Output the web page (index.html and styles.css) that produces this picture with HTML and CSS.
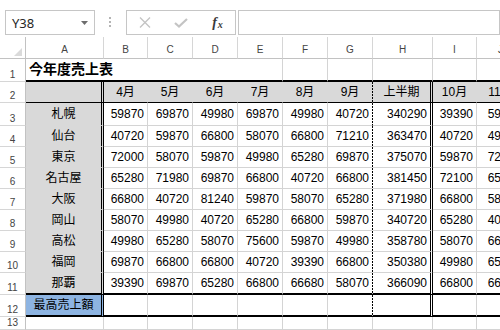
FILE: index.html
```html
<!DOCTYPE html>
<html lang="ja">
<head>
<meta charset="utf-8">
<title>今年度売上表</title>
<link rel="stylesheet" href="styles.css">
</head>
<body>
<div class="toolbar">
  <div class="namebox">
    <span class="nb-text">Y38</span>
    <svg class="nb-arrow" width="7" height="4" viewBox="0 0 7 4"><polygon points="0,0 7,0 3.5,4" fill="#6d6d6d"/></svg>
  </div>
  <div class="grip">
    <svg width="31" height="25" viewBox="0 0 31 25"><rect x="14" y="7" width="2" height="2" fill="#b4b4b4"/><rect x="14" y="11" width="2" height="2" fill="#b4b4b4"/><rect x="14" y="15" width="2" height="2" fill="#b4b4b4"/></svg>
  </div>
  <div class="fbtns">
    <span class="fbtn"><svg width="12" height="11" viewBox="0 0 12 11"><path d="M1 0.5 L11 10.5 M11 0.5 L1 10.5" stroke="#c4c4c4" stroke-width="1.4" fill="none"/></svg></span>
    <span class="fbtn"><svg width="14" height="10" viewBox="0 0 14 10"><path d="M1 5 L5 8.5 L13 1" stroke="#c4c4c4" stroke-width="2.2" fill="none"/></svg></span>
    <span class="fbtn fx"><i class="fx-f">f</i><i class="fx-x">x</i></span>
  </div>
  <div class="fbar"></div>
</div>

<div class="sheet">
  <div class="row hdr">
    <div class="ch corner"><svg width="8" height="8" viewBox="0 0 8 8"><polygon points="8,0 8,8 0,8" fill="#dadada"/></svg></div>
    <div class="ch">A</div><div class="ch">B</div><div class="ch">C</div><div class="ch">D</div><div class="ch">E</div>
    <div class="ch">F</div><div class="ch">G</div><div class="ch">H</div><div class="ch">I</div><div class="ch">J</div>
  </div>

  <div class="row r1">
    <div class="rh">1</div>
    <div class="c title">今年度売上表</div>
    <div class="c"></div><div class="c"></div><div class="c"></div><div class="c"></div><div class="c"></div>
  </div>

  <div class="row r2">
    <div class="rh">2</div>
    <div class="c hd dbl"></div>
    <div class="c hd ctr">4月</div><div class="c hd ctr">5月</div><div class="c hd ctr">6月</div>
    <div class="c hd ctr">7月</div><div class="c hd ctr">8月</div><div class="c hd ctr dash">9月</div>
    <div class="c hd ctr dbl">上半期</div><div class="c hd ctr">10月</div><div class="c hd ctr">11月</div>
  </div>

  <div class="row r3">
    <div class="rh">3</div>
    <div class="c lbl ctr dbl">札幌</div>
    <div class="c num">59870</div><div class="c num">69870</div><div class="c num">49980</div>
    <div class="c num">69870</div><div class="c num">49980</div><div class="c num dash">40720</div>
    <div class="c num dbl">340290</div><div class="c num">39390</div><div class="c num">59870</div>
  </div>

  <div class="row rn">
    <div class="rh">4</div>
    <div class="c lbl ctr dbl">仙台</div>
    <div class="c num">40720</div><div class="c num">59870</div><div class="c num">66800</div>
    <div class="c num">58070</div><div class="c num">66800</div><div class="c num dash">71210</div>
    <div class="c num dbl">363470</div><div class="c num">40720</div><div class="c num">49980</div>
  </div>

  <div class="row rn">
    <div class="rh">5</div>
    <div class="c lbl ctr dbl">東京</div>
    <div class="c num">72000</div><div class="c num">58070</div><div class="c num">59870</div>
    <div class="c num">49980</div><div class="c num">65280</div><div class="c num dash">69870</div>
    <div class="c num dbl">375070</div><div class="c num">59870</div><div class="c num">72100</div>
  </div>

  <div class="row rn">
    <div class="rh">6</div>
    <div class="c lbl ctr dbl">名古屋</div>
    <div class="c num">65280</div><div class="c num">71980</div><div class="c num">69870</div>
    <div class="c num">66800</div><div class="c num">40720</div><div class="c num dash">66800</div>
    <div class="c num dbl">381450</div><div class="c num">72100</div><div class="c num">65280</div>
  </div>

  <div class="row rn">
    <div class="rh">7</div>
    <div class="c lbl ctr dbl">大阪</div>
    <div class="c num">66800</div><div class="c num">40720</div><div class="c num">81240</div>
    <div class="c num">59870</div><div class="c num">58070</div><div class="c num dash">65280</div>
    <div class="c num dbl">371980</div><div class="c num">66800</div><div class="c num">58070</div>
  </div>

  <div class="row rn">
    <div class="rh">8</div>
    <div class="c lbl ctr dbl">岡山</div>
    <div class="c num">58070</div><div class="c num">49980</div><div class="c num">40720</div>
    <div class="c num">65280</div><div class="c num">66800</div><div class="c num dash">59870</div>
    <div class="c num dbl">340720</div><div class="c num">65280</div><div class="c num">40720</div>
  </div>

  <div class="row rn">
    <div class="rh">9</div>
    <div class="c lbl ctr dbl">高松</div>
    <div class="c num">49980</div><div class="c num">65280</div><div class="c num">58070</div>
    <div class="c num">75600</div><div class="c num">59870</div><div class="c num dash">49980</div>
    <div class="c num dbl">358780</div><div class="c num">58070</div><div class="c num">66800</div>
  </div>

  <div class="row rn">
    <div class="rh">10</div>
    <div class="c lbl ctr dbl">福岡</div>
    <div class="c num">69870</div><div class="c num">66800</div><div class="c num">66800</div>
    <div class="c num">40720</div><div class="c num">39390</div><div class="c num dash">66800</div>
    <div class="c num dbl">350380</div><div class="c num">49980</div><div class="c num">65280</div>
  </div>

  <div class="row r11">
    <div class="rh">11</div>
    <div class="c lbl ctr dbl">那覇</div>
    <div class="c num">39390</div><div class="c num">69870</div><div class="c num">65280</div>
    <div class="c num">66800</div><div class="c num">66680</div><div class="c num dash">58070</div>
    <div class="c num dbl">366090</div><div class="c num">66800</div><div class="c num">66800</div>
  </div>

  <div class="row r12">
    <div class="rh">12</div>
    <div class="c blue ctr dbl">最高売上額</div>
    <div class="c"></div><div class="c"></div><div class="c"></div>
    <div class="c"></div><div class="c"></div><div class="c dash"></div>
    <div class="c dbl"></div><div class="c"></div><div class="c"></div>
  </div>

  <div class="row r13">
    <div class="rh">13</div>
    <div class="c"></div><div class="c"></div><div class="c"></div><div class="c"></div><div class="c"></div>
    <div class="c"></div><div class="c"></div><div class="c"></div><div class="c"></div><div class="c"></div>
  </div>
</div>
</body>
</html>
```
FILE: styles.css
```css
* {
  box-sizing: border-box;
  margin: 0;
  padding: 0;
}

html,
body {
  width: 500px;
  height: 330px;
  overflow: hidden;
  background: #fff;
}

body {
  font-family: "Liberation Sans", "Noto Sans CJK JP", sans-serif;
  color: #000;
}

/* ---------- formula toolbar ---------- */
.toolbar {
  display: flex;
  align-items: flex-start;
  height: 37px;
  padding: 10px 0 0 5px;
  white-space: nowrap;
}

.namebox {
  width: 102px;
  height: 25px;
  border: 1px solid #c6c6c6;
  display: flex;
  align-items: center;
  padding: 0 6px 0 6px;
  font-family: "Noto Sans", sans-serif;
  font-size: 13px;
  color: #262626;
}

.nb-arrow {
  margin-left: auto;
}

.grip {
  width: 31px;
  height: 25px;
  display: flex;
}

.fbtns {
  width: 110px;
  height: 25px;
  border: 1px solid #c6c6c6;
  display: flex;
}

.fbtn {
  width: 36px;
  display: flex;
  align-items: center;
  justify-content: center;
}

.fx {
  font-family: "Liberation Serif", serif;
  color: #3a3a3a;
  font-weight: bold;
  padding-left: 1px;
}

.fx-f {
  font-size: 14px;
}

.fx-x {
  font-size: 10px;
  margin-top: 3px;
  margin-left: 1px;
}

.fbar {
  width: 262px;
  height: 25px;
  margin-left: 2px;
  border: 1px solid #c6c6c6;
  flex: none;
}

/* ---------- sheet grid ---------- */
.sheet {
  width: 500px;
  overflow: hidden;
}

.row {
  display: grid;
  grid-template-columns: 26px 78px 44px 45px 45px 45px 45px 45px 60px 44px 48px;
  width: 525px;
}

.hdr { height: 22px; }
.r1 { height: 23px; }
.r2 { height: 21px; }
.r3 { height: 23px; }
.rn { height: 21px; }
.r11 { height: 22px; }
.r12 { height: 22px; }
.r13 { height: 13px; }

.ch {
  border-right: 1px solid #d6d6d6;
  border-bottom: 1px solid #c2c2c2;
  display: flex;
  align-items: flex-end;
  justify-content: center;
  padding-bottom: 3px;
  font-size: 10px;
  line-height: 1;
  color: #444;
}

.corner {
  justify-content: flex-end;
  padding: 0 3px 2px 0;
  border-right-color: #c2c2c2;
}

.rh {
  border-right: 1px solid #c2c2c2;
  border-bottom: 1px solid #d6d6d6;
  display: flex;
  align-items: flex-end;
  justify-content: center;
  padding-bottom: 1px;
  font-size: 10px;
  line-height: 1;
  color: #444;
}

.c {
  border-right: 1px solid #d4d4d4;
  border-bottom: 1px solid #d4d4d4;
  display: flex;
  align-items: center;
  font-size: 12px;
  line-height: 1;
  white-space: nowrap;
  overflow: hidden;
  background-color: #fff;
}

.num {
  justify-content: flex-end;
  padding-right: 3px;
}

.ctr {
  justify-content: center;
}

.title {
  grid-column: span 5;
  font-size: 14px;
  font-weight: bold;
  padding: 0 0 2px 3px;
}

.r1 .c,
.r11 .c,
.r12 .c {
  border-bottom: 2px solid #000;
}

.lbl {
  background-color: #d9d9d9;
  border-bottom-color: #d9d9d9;
}

.hd {
  background-color: #d9d9d9;
  border-right-color: #d9d9d9;
  border-bottom: 1px solid #000;
}

.blue {
  background-color: #8db4e2;
}

.dash {
  border-right-color: transparent;
  background-image: repeating-linear-gradient(to bottom, #000 0 2px, transparent 2px 3px);
  background-size: 1px 100%;
  background-position: right top;
  background-repeat: no-repeat;
  background-origin: border-box;
}

.dbl {
  border-right: 3px double #000;
}
```
